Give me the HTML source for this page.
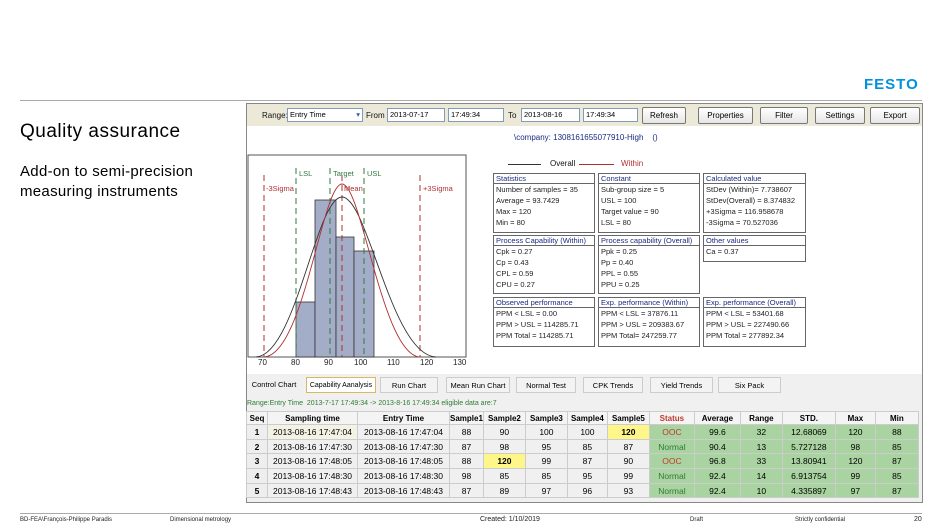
<!DOCTYPE html>
<html><head><meta charset="utf-8"><style>
*{margin:0;padding:0;box-sizing:border-box}
body{width:942px;height:530px;background:#fff;position:relative;overflow:hidden;font-family:"Liberation Sans",sans-serif}
.a{position:absolute;white-space:nowrap}
.s{font-size:8px;color:#111}
.btn{position:absolute;top:107px;height:17px;border:1px solid #777;border-radius:2px;background:linear-gradient(#fff,#e6e6e6);font-size:8px;text-align:center;line-height:15px}
.inp{position:absolute;top:108px;height:14px;border:1px solid #7f9db9;background:#fff;font-size:7.5px;line-height:12px;padding-left:2px}
.box{position:absolute;border:1px solid #666;background:#fff;font-size:7.5px;color:#222}
.box .h{border-bottom:1px solid #666;color:#1a2a80;height:10px;line-height:9px;padding-left:2px}
.box .l{padding-left:2px;height:11px;line-height:11px}
.tab{position:absolute;top:377px;height:16px;font-size:7.5px;text-align:center;line-height:15px;border:1px solid #ccc;background:#f3f3f3;white-space:nowrap;overflow:hidden}
table{position:absolute;left:246px;top:411px;border-collapse:collapse;font-size:8.5px}
td{border:1px solid #ccc;height:14.7px;text-align:center;padding:0}
th{border:1px solid #ccc;height:13px;font-size:8px;background:#f4f4f4}
.g{background:#a9d3a0}
</style></head><body>
<div class="a" style="left:20px;top:100px;width:902px;height:1px;background:#aaa"></div>
<div class="a" style="left:864px;top:76px;font:bold 15px 'Liberation Sans',sans-serif;color:#0091dc;letter-spacing:1px">FESTO</div>
<div class="a" style="left:20px;top:121px;font-size:19px;letter-spacing:0.5px;color:#000">Quality assurance</div>
<div class="a" style="left:20px;top:162px;font-size:15px;line-height:20px;letter-spacing:0.3px;color:#000">Add-on to semi-precision<br>measuring instruments</div>

<div class="a" style="left:246px;top:103px;width:677px;height:400px;border:1px solid #888;background:#fff"></div>
<div class="a" style="left:247px;top:104px;width:675px;height:22px;background:#ece9d8"></div>
<div class="a s" style="left:262px;top:111px">Range:</div>
<div class="inp" style="left:287px;width:76px">Entry Time<span style="float:right;color:#3a5bbf;padding-right:2px">▾</span></div>
<div class="a s" style="left:366px;top:111px">From</div>
<div class="inp" style="left:387px;width:58px">2013-07-17</div>
<div class="inp" style="left:448px;width:56px">17:49:34</div>
<div class="a s" style="left:508px;top:111px">To</div>
<div class="inp" style="left:521px;width:59px">2013-08-16</div>
<div class="inp" style="left:583px;width:55px">17:49:34</div>
<div class="btn" style="left:642px;width:44px">Refresh</div>
<div class="btn" style="left:698px;width:55px">Properties</div>
<div class="btn" style="left:760px;width:48px">Filter</div>
<div class="btn" style="left:815px;width:50px">Settings</div>
<div class="btn" style="left:870px;width:50px">Export</div>
<div class="a s" style="left:514px;top:133px;color:#1a2a80">\company: 1308161655077910-High &nbsp;&nbsp; ()</div>

<svg class="a" style="left:246px;top:150px" width="230" height="222">
<rect x="2" y="5" width="218" height="202" fill="#fff" stroke="#555"/>
<g fill="#a4adc8" stroke="#333" stroke-width="0.8">
<rect x="50" y="152" width="19" height="55"/><rect x="69" y="50" width="21" height="157"/><rect x="90" y="87" width="18" height="120"/><rect x="108" y="101" width="20" height="106"/></g>
<g stroke-dasharray="6,4" stroke-width="1"><line x1="18" y1="25" x2="18" y2="207" stroke="#b03030"/><line x1="174" y1="25" x2="174" y2="207" stroke="#b03030"/><line x1="96" y1="25" x2="96" y2="207" stroke="#b03030"/>
<line x1="50" y1="18" x2="50" y2="207" stroke="#307a40"/><line x1="84" y1="18" x2="84" y2="207" stroke="#307a40"/><line x1="118" y1="18" x2="118" y2="207" stroke="#307a40"/></g>
<path d="M10,207 C50,205 70,47 96,47 C122,47 145,205 190,207" fill="none" stroke="#333" stroke-width="0.9"/>
<path d="M18,207 C58,205 76,34 96,34 C116,34 136,205 174,207" fill="none" stroke="#b03030" stroke-width="0.9"/>
<g font-size="7.5" font-family="Liberation Sans"><text x="53" y="26" fill="#307a40">LSL</text><text x="87" y="26" fill="#307a40">Target</text><text x="121" y="26" fill="#307a40">USL</text>
<text x="20" y="41" fill="#b03030">-3Sigma</text><text x="98" y="41" fill="#b03030">Mean</text><text x="177" y="41" fill="#b03030">+3Sigma</text>
<g fill="#222" font-size="8"><text x="12" y="215">70</text><text x="45" y="215">80</text><text x="78" y="215">90</text><text x="108" y="215">100</text><text x="141" y="215">110</text><text x="174" y="215">120</text><text x="207" y="215">130</text></g></g>
</svg>

<div class="a" style="left:508px;top:164px;width:33px;height:1px;background:#333"></div>
<div class="a s" style="left:550px;top:159px">Overall</div>
<div class="a" style="left:579px;top:164px;width:35px;height:1px;background:#b03030"></div>
<div class="a s" style="left:621px;top:159px;color:#b03030">Within</div>

<div class="box" style="left:493px;top:173px;width:102px;height:60px"><div class="h">Statistics</div><div class="l">Number of samples = 35</div><div class="l">Average = 93.7429</div><div class="l">Max = 120</div><div class="l">Min = 80</div></div>
<div class="box" style="left:598px;top:173px;width:102px;height:60px"><div class="h">Constant</div><div class="l">Sub-group size = 5</div><div class="l">USL = 100</div><div class="l">Target value = 90</div><div class="l">LSL = 80</div></div>
<div class="box" style="left:703px;top:173px;width:103px;height:60px"><div class="h">Calculated value</div><div class="l">StDev (Within)= 7.738607</div><div class="l">StDev(Overall) = 8.374832</div><div class="l">+3Sigma = 116.958678</div><div class="l">-3Sigma = 70.527036</div></div>
<div class="box" style="left:493px;top:235px;width:102px;height:59px"><div class="h">Process Capability (Within)</div><div class="l">Cpk = 0.27</div><div class="l">Cp = 0.43</div><div class="l">CPL = 0.59</div><div class="l">CPU = 0.27</div></div>
<div class="box" style="left:598px;top:235px;width:102px;height:59px"><div class="h">Process capability (Overall)</div><div class="l">Ppk = 0.25</div><div class="l">Pp = 0.40</div><div class="l">PPL = 0.55</div><div class="l">PPU = 0.25</div></div>
<div class="box" style="left:703px;top:235px;width:103px;height:27px"><div class="h">Other values</div><div class="l">Ca = 0.37</div></div>
<div class="box" style="left:493px;top:297px;width:102px;height:50px"><div class="h">Observed performance</div><div class="l">PPM &lt; LSL = 0.00</div><div class="l">PPM &gt; USL = 114285.71</div><div class="l">PPM Total = 114285.71</div></div>
<div class="box" style="left:598px;top:297px;width:102px;height:50px"><div class="h">Exp. performance (Within)</div><div class="l">PPM &lt; LSL = 37876.11</div><div class="l">PPM &gt; USL = 209383.67</div><div class="l">PPM Total= 247259.77</div></div>
<div class="box" style="left:703px;top:297px;width:103px;height:50px"><div class="h">Exp. performance (Overall)</div><div class="l">PPM &lt; LSL = 53401.68</div><div class="l">PPM &gt; USL = 227490.66</div><div class="l">PPM Total = 277892.34</div></div>

<div class="a" style="left:247px;top:374px;width:675px;height:128px;background:#f0f0f0"></div>
<div class="tab" style="left:248px;width:52px;border:none;background:none">Control Chart</div>
<div class="tab" style="left:306px;width:70px;background:#fff;border-color:#d8b860;font-size:7px">Capability Aanalysis</div>
<div class="tab" style="left:380px;width:58px">Run Chart</div>
<div class="tab" style="left:446px;width:64px">Mean Run Chart</div>
<div class="tab" style="left:516px;width:60px">Normal Test</div>
<div class="tab" style="left:583px;width:60px">CPK Trends</div>
<div class="tab" style="left:650px;width:63px">Yield Trends</div>
<div class="tab" style="left:718px;width:63px">Six Pack</div>
<div class="a" style="left:247px;top:400px;font-size:7px;color:#2e7d32">Range:Entry Time &nbsp;2013-7-17 17:49:34 -&gt; 2013-8-16 17:49:34 eligible data are:7</div>

<table>
<tr><th style="width:21px">Seq</th><th style="width:90px">Sampling time</th><th style="width:92px">Entry Time</th><th style="width:32px">Sample1</th><th style="width:42px">Sample2</th><th style="width:42px">Sample3</th><th style="width:40px">Sample4</th><th style="width:42px">Sample5</th><th style="width:45px;color:#c0392b">Status</th><th style="width:46px">Average</th><th style="width:42px">Range</th><th style="width:53px">STD.</th><th style="width:40px">Max</th><th style="width:43px">Min</th></tr>
<tr><td style="background:#eee"><b>1</b></td><td style="background:#f4f2e4">2013-08-16 17:47:04</td><td>2013-08-16 17:47:04</td><td>88</td><td>90</td><td>100</td><td>100</td><td style="background:#fff68a"><b>120</b></td><td class="g" style="color:#c0392b">OOC</td><td class="g">99.6</td><td class="g">32</td><td class="g">12.68069</td><td class="g">120</td><td class="g">88</td></tr>
<tr><td style="background:#eee"><b>2</b></td><td>2013-08-16 17:47:30</td><td>2013-08-16 17:47:30</td><td>87</td><td>98</td><td>95</td><td>85</td><td>87</td><td class="g" style="color:#2e7d32">Normal</td><td class="g">90.4</td><td class="g">13</td><td class="g">5.727128</td><td class="g">98</td><td class="g">85</td></tr>
<tr><td style="background:#eee"><b>3</b></td><td>2013-08-16 17:48:05</td><td>2013-08-16 17:48:05</td><td>88</td><td style="background:#fff68a"><b>120</b></td><td>99</td><td>87</td><td>90</td><td class="g" style="color:#c0392b">OOC</td><td class="g">96.8</td><td class="g">33</td><td class="g">13.80941</td><td class="g">120</td><td class="g">87</td></tr>
<tr><td style="background:#eee"><b>4</b></td><td>2013-08-16 17:48:30</td><td>2013-08-16 17:48:30</td><td>98</td><td>85</td><td>85</td><td>95</td><td>99</td><td class="g" style="color:#2e7d32">Normal</td><td class="g">92.4</td><td class="g">14</td><td class="g">6.913754</td><td class="g">99</td><td class="g">85</td></tr>
<tr><td style="background:#eee"><b>5</b></td><td>2013-08-16 17:48:43</td><td>2013-08-16 17:48:43</td><td>87</td><td>89</td><td>97</td><td>96</td><td>93</td><td class="g" style="color:#2e7d32">Normal</td><td class="g">92.4</td><td class="g">10</td><td class="g">4.335897</td><td class="g">97</td><td class="g">87</td></tr>
</table>

<div class="a" style="left:20px;top:513px;width:902px;height:1px;background:#aaa"></div>
<div class="a" style="left:20px;top:517px;font-size:6px;color:#222">BD-FEA\François-Philippe Paradis</div>
<div class="a" style="left:170px;top:517px;font-size:6px;color:#222">Dimensional metrology</div>
<div class="a" style="left:480px;top:516px;font-size:7px;color:#222">Created: 1/10/2019</div>
<div class="a" style="left:690px;top:517px;font-size:6px;color:#222">Draft</div>
<div class="a" style="left:795px;top:517px;font-size:6px;color:#222">Strictly confidential</div>
<div class="a" style="left:914px;top:516px;font-size:7px;color:#222">20</div>
</body></html>
